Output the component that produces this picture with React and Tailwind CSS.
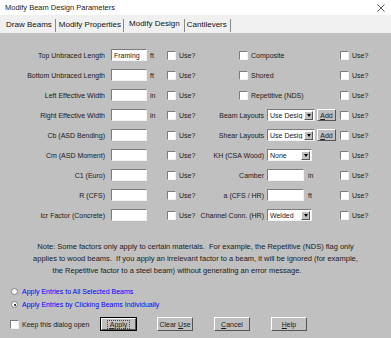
import React from 'react';

const sunken =
  'bg-white border border-t-[#7c7c7c] border-l-[#7c7c7c] border-r-[#f2f2f2] border-b-[#f2f2f2]';
const raised =
  'bg-[#c0c0c0] border border-t-white border-l-white border-r-[#555] border-b-[#555]';

const leftRows = [
  { label: 'Top Unbraced Length', value: 'Framing', unit: 'ft' },
  { label: 'Bottom Unbraced Length', value: '', unit: 'ft' },
  { label: 'Left Effective Width', value: '', unit: 'in' },
  { label: 'Right Effective Width', value: '', unit: 'in' },
  { label: 'Cb (ASD Bending)', value: '', unit: '' },
  { label: 'Cm (ASD Moment)', value: '', unit: '' },
  { label: 'C1 (Euro)', value: '', unit: '' },
  { label: 'R (CFS)', value: '', unit: '' },
  { label: 'Icr Factor (Concrete)', value: '', unit: '' },
];

const rightRows = [
  { type: 'check', label: 'Composite' },
  { type: 'check', label: 'Shored' },
  { type: 'check', label: 'Repetitive (NDS)' },
  { type: 'select', label: 'Beam Layouts', value: 'Use Desig', width: 'w-[48px]', add: true },
  { type: 'select', label: 'Shear Layouts', value: 'Use Desig', width: 'w-[48px]', add: true },
  { type: 'select', label: 'KH (CSA Wood)', value: 'None', width: 'w-[45px]' },
  { type: 'input', label: 'Camber', unit: 'in' },
  { type: 'input', label: 'a (CFS / HR)', unit: 'ft' },
  { type: 'select', label: 'Channel Conn. (HR)', value: 'Welded', width: 'w-[45px]' },
];

const Check = () => <span className={`block w-[9px] h-[9px] shrink-0 ${sunken}`} />;

const Use = () => (
  <div className="flex items-center">
    <Check />
    <span className="ml-[3px]">Use?</span>
  </div>
);

const Select = ({ value, width }) => (
  <div className={`${width} h-[12px] flex items-center ${sunken}`}>
    <span className="flex-1 pl-[2px] overflow-hidden whitespace-nowrap">{value}</span>
    <span className={`w-[9px] h-[9px] mr-[1px] flex items-center justify-center ${raised}`}>
      <span className="block w-0 h-0 border-l-[2.5px] border-r-[2.5px] border-t-[3px] border-l-transparent border-r-transparent border-t-black" />
    </span>
  </div>
);

const renderRight = (row) => {
  if (row.type === 'check') {
    return (
      <div className="flex items-center pl-[39px]">
        <Check />
        <span className="ml-[3px]">{row.label}</span>
      </div>
    );
  }
  return (
    <div className="flex items-center">
      <span className="w-[64px] text-right whitespace-nowrap">{row.label}</span>
      <div className="ml-[3px] flex items-center">
        {row.type === 'select' && <Select value={row.value} width={row.width} />}
        {row.type === 'input' && <span className={`block w-[37px] h-[12px] ${sunken}`} />}
        {row.unit && <span className="ml-[4px]">{row.unit}</span>}
        {row.add && (
          <span className={`ml-[2px] w-[19px] h-[12px] flex items-center justify-center ${raised}`}>
            <span>
              <span className="underline">A</span>dd
            </span>
          </span>
        )}
      </div>
    </div>
  );
};

const Button = ({ children, width, focused }) => (
  <div
    className={`${width} h-[14px] flex items-center justify-center ${
      focused ? 'bg-[#c0c0c0] border border-black' : raised
    }`}
  >
    {focused ? (
      <div className={`w-full h-full flex items-center justify-center ${raised}`}>
        <span className="outline outline-1 outline-dotted outline-[#444] px-[2px]">{children}</span>
      </div>
    ) : (
      children
    )}
  </div>
);

export default function App() {
  return (
    <div className="w-[391px] h-[338px] overflow-hidden bg-[#c0c0c0] font-['Liberation_Sans',Arial,sans-serif] text-[#1a1a1a] text-[7px] leading-none flex flex-col">
      <div className="h-[15px] shrink-0 bg-white flex items-center justify-between pl-[5px] pr-[6px]">
        <span className="text-[7.5px] text-[#222]">Modify Beam Design Parameters</span>
        <svg width="8" height="8" viewBox="0 0 8 8">
          <path d="M0.5 0.5 L7.5 7.5 M7.5 0.5 L0.5 7.5" stroke="#333" strokeWidth="0.8" />
        </svg>
      </div>

      <div className="h-[18px] shrink-0 bg-[#f0f0f0] flex items-center pl-[6px] text-[8px] text-[#111]">
        <span className="pt-[2px]">Draw Beams</span>
        <span className="ml-[3px] mr-[3px] w-px h-[13px] mt-[3px] bg-[#8a8a8a]" />
        <span className="pt-[2px]">Modify Properties</span>
        <span className="ml-[2px] mr-[5px] w-px h-[13px] mt-[3px] bg-[#8a8a8a]" />
        <span className="pb-[1px]">Modify Design</span>
        <span className="ml-[4px] mr-[2px] w-px h-[13px] mt-[3px] bg-[#8a8a8a]" />
        <span className="pt-[2px]">Cantilevers</span>
        <span className="ml-[3px] w-px h-[13px] mt-[3px] bg-[#8a8a8a]" />
      </div>

      <div className="pt-[12px] flex flex-col">
        {leftRows.map((row, idx) => (
          <div key={row.label} className="h-[20px] flex items-center">
            <div className="w-[200px] flex items-center">
              <span className="w-[105px] text-right whitespace-nowrap">{row.label}</span>
              <span className={`ml-[6px] w-[36px] h-[12px] flex items-center pl-[2px] ${sunken}`}>
                {row.value}
              </span>
              <span className="ml-[3px] w-[17px]">{row.unit}</span>
              <Use />
            </div>
            <div className="w-[140px]">{renderRight(rightRows[idx])}</div>
            <Use />
          </div>
        ))}
      </div>

      <div className="mt-[16px] text-center leading-[12px] whitespace-pre text-[7.5px]">
        <div>Note: Some factors only apply to certain materials.  For example, the Repetitive (NDS) flag only</div>
        <div>applies to wood beams.  If you apply an irrelevant factor to a beam, it will be ignored (for example,</div>
        <div className="pr-[37px]">the Repetitive factor to a steel beam) without generating an error message.</div>
      </div>

      <div className="mt-[8px] flex flex-col text-[#0000ff]">
        <div className="h-[13px] flex items-center pl-[11px]">
          <span className="block w-[7px] h-[7px] rounded-full bg-white border border-[#808080]" />
          <span className="ml-[4px]">Apply Entries to All Selected Beams</span>
        </div>
        <div className="h-[13px] flex items-center pl-[11px]">
          <span className="w-[7px] h-[7px] rounded-full bg-white border border-[#808080] flex items-center justify-center">
            <span className="block w-[2px] h-[2px] rounded-full bg-black" />
          </span>
          <span className="ml-[4px]">Apply Entries by Clicking Beams Individually</span>
        </div>
      </div>

      <div className="mt-[6px] flex items-center">
        <div className="w-[100px] flex items-center pl-[10px]">
          <Check />
          <span className="ml-[3px]">Keep this dialog open</span>
        </div>
        <Button width="w-[37px]" focused>
          <span className="underline">A</span>pply
        </Button>
        <div className="ml-[20px]">
          <Button width="w-[36px]">
            <span>
              Clear <span className="underline">U</span>se
            </span>
          </Button>
        </div>
        <div className="ml-[21px]">
          <Button width="w-[36px]">
            <span>
              <span className="underline">C</span>ancel
            </span>
          </Button>
        </div>
        <div className="ml-[21px]">
          <Button width="w-[36px]">
            <span>
              <span className="underline">H</span>elp
            </span>
          </Button>
        </div>
      </div>
    </div>
  );
}
